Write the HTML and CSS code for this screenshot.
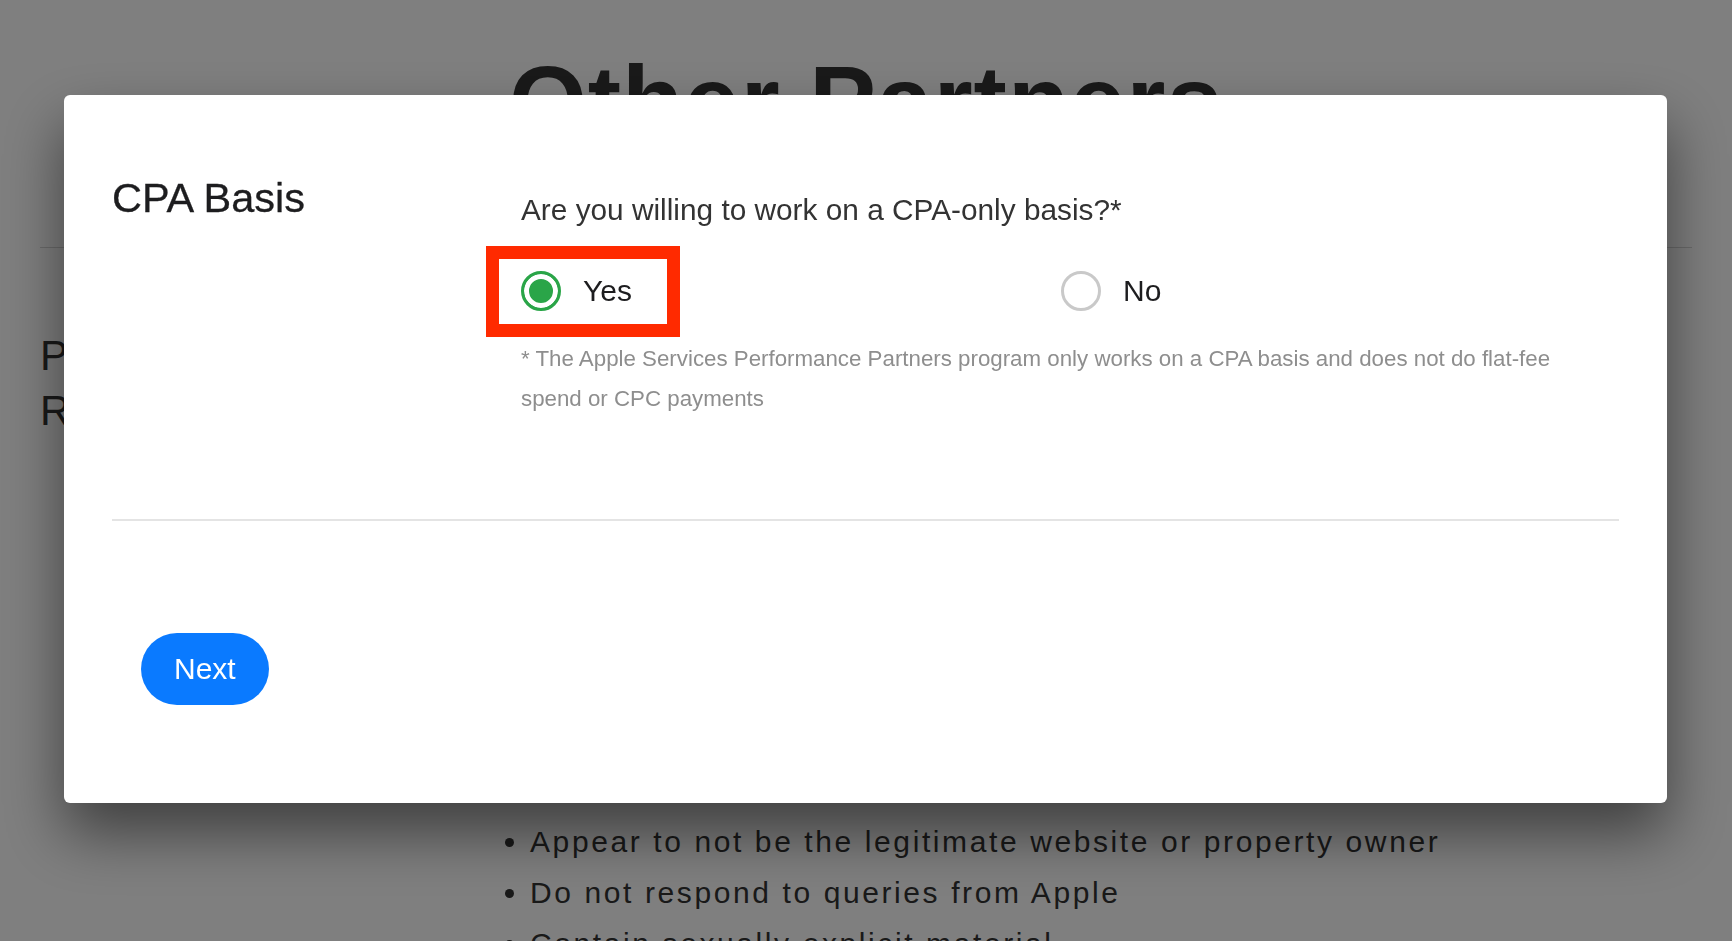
FILE: index.html
```html
<!DOCTYPE html>
<html lang="en">
<head>
  <meta charset="UTF-8">
  <meta name="viewport" content="width=device-width, initial-scale=1.0">
  <title>Other Partners</title>
  <link rel="stylesheet" href="styles.css">
</head>
<body>
  <div class="page">
    <h1 class="page-title">Other Partners</h1>
    <hr class="page-rule">
    <section class="rules">
      <h2 class="rules-title">Program Requirements</h2>
      <div class="rules-body">
        <p>Apple may remove partners from the program who:</p>
        <ul class="rules-list">
          <li>Appear to not be the legitimate website or property owner</li>
          <li>Do not respond to queries from Apple</li>
          <li>Contain sexually explicit material</li>
        </ul>
      </div>
    </section>
  </div>

  <div class="overlay">
    <div class="modal">
      <div class="modal-body">
        <h2 class="modal-title">CPA Basis</h2>
        <div class="question">
          <p class="question-text">Are you willing to work on a CPA-only basis?*</p>
          <div class="options">
            <label class="option option-marked">
              <input type="radio" name="cpa" checked>
              <span>Yes</span>
            </label>
            <label class="option">
              <input type="radio" name="cpa">
              <span>No</span>
            </label>
          </div>
          <p class="note">* The Apple Services Performance Partners program only works on a CPA basis and does not do flat-fee spend or CPC payments</p>
        </div>
      </div>
      <div class="modal-footer">
        <button class="btn-next">Next</button>
      </div>
    </div>
  </div>
</body>
</html>
```

FILE: styles.css
```css
body {
  margin: 0;
  font-family: "Liberation Sans", Arial, sans-serif;
  color: #1d1d1f;
  background: #fff;
  overflow: hidden;
}

/* page behind the dialog */
.page {
  padding: 0 40px;
  color: #333;
}
.page-title {
  margin: 51px 0 0;
  font-size: 100px;
  line-height: 100px;
  font-weight: 700;
  letter-spacing: 1px;
  text-align: center;
}
.page-rule {
  margin: 96px 0 0;
  border: 0;
  border-top: 1px solid #d6d6d6;
}
.rules {
  display: grid;
  grid-template-columns: 450px 1fr;
  margin-top: 80px;
}
.rules-title {
  margin: 0;
  max-width: 300px;
  font-size: 42px;
  line-height: 55px;
  font-weight: 400;
}
.rules-body p {
  margin: 0;
  font-size: 30px;
  line-height: 51px;
}
.rules-list {
  margin: 437px 0 0;
  padding-left: 40px;
  font-size: 30px;
  line-height: 51px;
  letter-spacing: 2.6px;
}

/* dialog */
.overlay {
  position: fixed;
  inset: 0;
  padding: 95px 65px 0 64px;
  background: rgba(0, 0, 0, 0.5);
}
.modal {
  padding: 0 48px;
  background: #fff;
  border-radius: 6px;
  box-shadow: 0 30px 60px rgba(0, 0, 0, 0.5);
}
.modal-body {
  display: grid;
  grid-template-columns: 409px 1fr;
  padding: 79px 0 100px;
  border-bottom: 2px solid #e4e4e4;
}
.modal-title {
  margin: 0;
  font-size: 41.5px;
  line-height: 48px;
  font-weight: 400;
  -webkit-text-stroke: 0.3px #1d1d1f;
}
.question {
  padding-top: 18px;
}
.question-text {
  margin: 0;
  font-size: 29.8px;
  line-height: 36px;
  color: #333;
}
.options {
  display: grid;
  grid-template-columns: 540px auto;
  justify-content: start;
  margin-top: 43px;
}
.option {
  position: relative;
  display: inline-flex;
  align-items: center;
  gap: 22px;
  justify-self: start;
  font-size: 30px;
  line-height: 40px;
}
.option input {
  appearance: none;
  width: 40px;
  height: 40px;
  margin: 0;
  border: 3.5px solid #c9c9c9;
  border-radius: 50%;
}
.option input:checked {
  border-color: #2aa548;
  background: #2aa548;
  box-shadow: inset 0 0 0 5px #fff;
}
/* red annotation box */
.option-marked::after {
  content: "";
  position: absolute;
  left: -35px;
  top: -25px;
  width: 194px;
  height: 91px;
  box-sizing: border-box;
  border: 13px solid #ff2a00;
}
.note {
  max-width: 1060px;
  margin: 28px 0 0;
  font-size: 22.3px;
  line-height: 40px;
  color: #8e8e8e;
}
.modal-footer {
  padding: 112px 0 98px 29px;
}
.btn-next {
  height: 72px;
  padding: 0 33px;
  border: 0;
  border-radius: 36px;
  background: #0a7aff;
  color: #fff;
  font-family: inherit;
  font-size: 30px;
}
```
